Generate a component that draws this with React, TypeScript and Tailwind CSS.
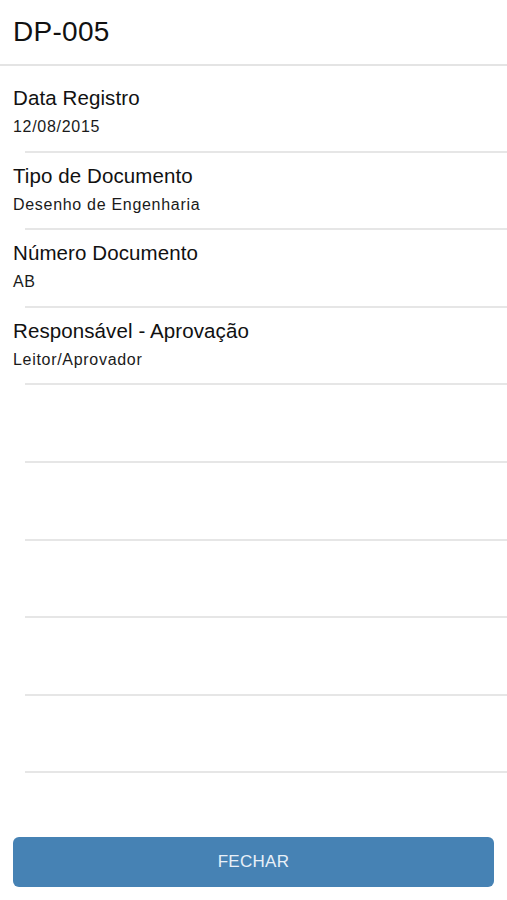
const FIELDS = [
  { label: "Data Registro", value: "12/08/2015" },
  { label: "Tipo de Documento", value: "Desenho de Engenharia" },
  { label: "Número Documento", value: "AB" },
  { label: "Responsável - Aprovação", value: "Leitor/Aprovador" },
];

// Empty rows fill the rest of the list, like the native table view
const EMPTY_ROWS = 5;

export default function App() {
  return (
    <div className="flex h-[900px] w-[507px] flex-col bg-white font-['Liberation_Sans',Arial,sans-serif] text-[#111]">
      <header className="flex h-[66px] items-center border-b-2 border-[#e4e4e4] px-[13px]">
        <h1 className="text-[28px] leading-none tracking-[0.3px]">DP-005</h1>
      </header>

      <ul className="pt-[9px]">
        {FIELDS.map((f) => (
          <li key={f.label} className="flex h-[77.6px] flex-col">
            <div className="flex flex-1 flex-col px-[13px] pt-[11px]">
              <span className="text-[20.5px] leading-[24px] tracking-[0.1px]">{f.label}</span>
              <span className="mt-[7px] text-[16px] leading-[20px] tracking-[0.7px] text-[#1a1a1a]">
                {f.value}
              </span>
            </div>
            <div className="ml-[25px] h-[2px] bg-[#e6e6e6]" />
          </li>
        ))}
        {Array.from({ length: EMPTY_ROWS }).map((_, i) => (
          <li key={i} className="flex h-[77.6px] flex-col justify-end">
            <div className="ml-[25px] h-[2px] bg-[#e6e6e6]" />
          </li>
        ))}
      </ul>

      <div className="mt-auto px-[13px] pb-[13px]">
        <button
          type="button"
          className="flex h-[50px] w-full items-center justify-center rounded-[6px] bg-[#4682b4] text-[17px] tracking-[0.3px] text-[#e8f0f8]"
        >
          FECHAR
        </button>
      </div>
    </div>
  );
}
